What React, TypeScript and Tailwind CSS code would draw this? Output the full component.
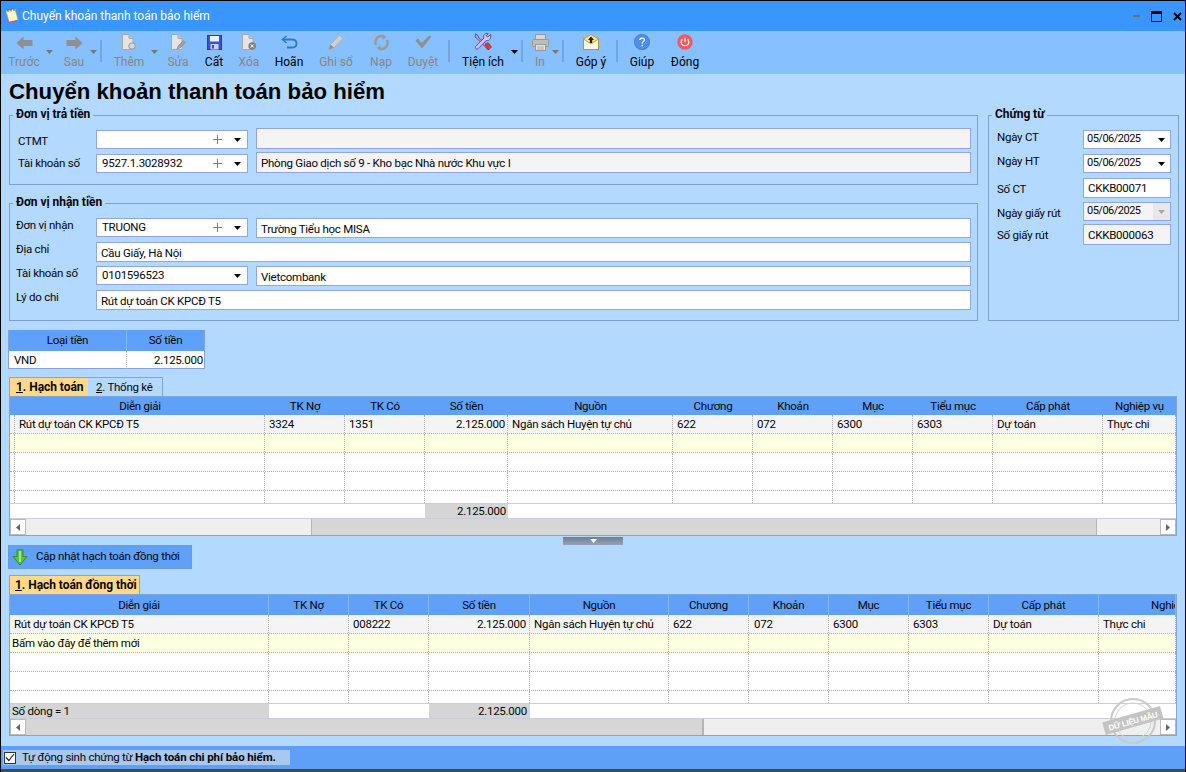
import React from "react";

const G = "#8f8f8f";

const Back = () => (
  <svg className="mt-[1px]" width="17" height="14" viewBox="0 0 17 14"><path d="M0.5 7 L7.5 0.5 V4 H16.5 V10 H7.5 V13.5 Z" fill={G} /></svg>
);
const Next = () => (
  <svg className="mt-[1px]" width="17" height="14" viewBox="0 0 17 14"><path d="M16.5 7 L9.5 0.5 V4 H0.5 V10 H9.5 V13.5 Z" fill={G} /></svg>
);
const Page = ({ children }: { children?: React.ReactNode }) => (
  <svg width="16" height="17" viewBox="0 0 16 17">
    <path d="M1.5 0.5 H8 L12 4.5 V15.5 H1.5 Z" fill="#e4e4e4" stroke="#a8a8a8" />
    <path d="M8 0.5 V4.5 H12" fill="#c4c4c4" stroke="#a8a8a8" />
    {children}
  </svg>
);
const Add = () => (
  <Page><circle cx="11" cy="12" r="3.2" fill="#d8d8d8" stroke="#999" /></Page>
);
const Edit = () => (
  <Page><path d="M7 15 L8 12 L13.5 6.5 L15.5 8.5 L10 14 Z" fill="#a0a0a0" stroke="#8a8a8a" strokeWidth="0.6" /></Page>
);
const Del = () => (
  <Page>
    <circle cx="11.2" cy="12" r="3.8" fill="#7d7d7d" />
    <path d="M9.6 10.4 L12.8 13.6 M12.8 10.4 L9.6 13.6" stroke="#fff" strokeWidth="1" />
  </Page>
);
const Save = () => (
  <svg width="15" height="15" viewBox="0 0 15 15">
    <rect x="0.5" y="0.5" width="14" height="14" fill="#3b4fd8" stroke="#2a3bb8" />
    <rect x="3" y="1" width="9" height="5.5" fill="#eef2ff" />
    <rect x="3.5" y="9" width="8" height="5.5" fill="#c9d2f5" />
    <rect x="5" y="10" width="2" height="3.5" fill="#3b4fd8" />
  </svg>
);
const Undo = () => (
  <svg width="17" height="14" viewBox="0 0 17 14" fill="none">
    <path d="M5.5 1 L1.5 4.5 L5.5 8" stroke="#2f78d0" strokeWidth="1.6" />
    <path d="M2 4.5 H11 C14 4.5 15.5 6.2 15.5 8.5 C15.5 11 14 12.5 11 12.5 H6" stroke="#2f78d0" strokeWidth="1.8" />
  </svg>
);
const Pencil = () => (
  <svg width="16" height="16" viewBox="0 0 16 16">
    <path d="M1 15.5 L2.5 10.5 L11.5 1 L15 4.5 L6 13.8 Z" fill="#cfcfcf" stroke="#b0b0b0" />
    <path d="M1 15.5 L2.5 10.5 L6 13.8 Z" fill="#8f8f8f" />
  </svg>
);
const Reload = () => (
  <svg width="17" height="17" viewBox="0 0 17 17" fill="none">
    <path d="M3 11 C1 6.5 4 2 8.5 2 L10.5 2.2" stroke="#9a9a9a" strokeWidth="2.4" />
    <path d="M9.5 0 L13.5 3 L9.5 6 Z" fill="#9a9a9a" />
    <path d="M14 6 C16 10.5 13 15 8.5 15 L6.5 14.8" stroke="#9a9a9a" strokeWidth="2.4" />
    <path d="M7.5 17 L3.5 14 L7.5 11 Z" fill="#9a9a9a" />
  </svg>
);
const Check = () => (
  <svg width="17" height="14" viewBox="0 0 17 14"><path d="M0.5 5.5 L3 3.5 L6.5 8 L14.5 0.5 L16.5 1.5 L7 13.5 Z" fill={G} /></svg>
);
const Tools = () => (
  <svg width="18" height="18" viewBox="0 0 18 18">
    <path d="M1.5 0.8 L4 2.5 L5 5 L16 14 L13.8 16.5 L3.5 6 L1 4 Z" fill="#b59be0" stroke="#4a2c90" strokeWidth="0.7" />
    <path d="M16.5 1.5 L13.8 4 L12 2.8 L14 0.7 C11 -0.3 8.8 2.5 10 5 L1.8 13.5 C0.7 15 2.4 17 4 15.7 L12.2 7.5 C15 8.5 17.8 5.5 16.5 1.5 Z" fill="#d6c8f2" stroke="#4a2c90" strokeWidth="0.8" />
    <path d="M11 12 L14 9.5 L17.5 14 L14.5 17 Z" fill="#e0393a" stroke="#8c1d1d" strokeWidth="0.6" />
  </svg>
);
const Printer = () => (
  <svg width="17" height="17" viewBox="0 0 17 17">
    <rect x="3.5" y="0.5" width="10" height="5" fill="#d8d8d8" stroke="#999" />
    <rect x="0.5" y="5.5" width="16" height="7" rx="1" fill="#bdbdbd" stroke="#999" />
    <rect x="3.5" y="10.5" width="10" height="6" fill="#e6e6e6" stroke="#999" />
    <path d="M5 13 H12 M5 15 H12" stroke="#aaa" />
  </svg>
);
const Mail = () => (
  <svg width="16" height="16" viewBox="0 0 16 16">
    <rect x="0.5" y="5" width="15" height="10.5" fill="#fff8e0" stroke="#b8923a" />
    <path d="M0.5 5 L8 0.5 L15.5 5 L8 10 Z" fill="#ffe38a" stroke="#b8923a" strokeWidth="0.8" />
    <path d="M8 2.5 L11 6 H9.2 V9 H6.8 V6 H5 Z" fill="#222" />
  </svg>
);
const Help = () => (
  <svg width="16" height="16" viewBox="0 0 16 16">
    <circle cx="8" cy="8" r="7.7" fill="#4d8fe8" stroke="#3a6fc0" strokeWidth="0.6" />
    <path d="M5.8 6 C5.8 3.4 10.4 3.4 10.4 6 C10.4 7.6 8.2 7.6 8.2 9.6" fill="none" stroke="#fff" strokeWidth="1.3" />
    <rect x="7.5" y="10.8" width="1.4" height="1.5" fill="#fff" />
  </svg>
);
const Power = () => (
  <svg width="16" height="16" viewBox="0 0 16 16">
    <circle cx="8" cy="8" r="7.7" fill="#ee5b62" />
    <path d="M5.4 5.2 A3.8 3.8 0 1 0 10.6 5.2" fill="none" stroke="#fff" strokeWidth="1.2" />
    <path d="M8 3.4 V8" stroke="#fff" strokeWidth="1.2" />
  </svg>
);
const Caret = ({ fill = "#000", w = 7 }: { fill?: string; w?: number }) => (
  <svg width={w} height="4" viewBox="0 0 7 4"><path d="M0 0 H7 L3.5 4 Z" fill={fill} /></svg>
);
const Plus = () => (
  <svg width="9" height="9" viewBox="0 0 9 9" shapeRendering="crispEdges"><path d="M4.5 0 V9 M0 4.5 H9" stroke="#2b95f5" strokeWidth="1" /></svg>
);

function Tool({ cls, label, icon, off }: { cls: string; label: string; icon: React.ReactNode; off?: boolean }) {
  return (
    <div className={`${cls} shrink-0 flex flex-col items-center`}>
      <div className="h-[22px] w-full flex items-center justify-center">{icon}</div>
      <div className={`mt-[2px] h-[15px] leading-[15px] whitespace-nowrap text-[12px] tracking-normal ${off ? "text-[#868686]" : "text-black"}`}>{label}</div>
    </div>
  );
}
function TCaret({ cls, fill }: { cls: string; fill: string }) {
  return (
    <div className={`${cls} shrink-0 pt-[19px] flex justify-center`}><Caret fill={fill} /></div>
  );
}
function Sep({ cls }: { cls: string }) {
  return <div className={`${cls} shrink-0 mt-[9px] h-[22px] w-[2px] bg-[#74a5dc]`} />;
}

const IB = "border border-[#8fa6e2]";

function Combo({ text, plus = true }: { text: string; plus?: boolean }) {
  return (
    <div className={`${IB} mt-[2px] w-[152px] h-[19px] bg-white flex items-center shrink-0`}>
      <span className="pl-[5px] flex-1 leading-[17px]">{text}</span>
      {plus && <span className="flex mr-[12px]"><Plus /></span>}
      <span className="flex mr-[6px]"><Caret /></span>
    </div>
  );
}
function Box({ text, cls }: { text: string; cls: string }) {
  return (
    <div className={`${IB} ${cls} pl-[4px] flex items-center leading-[16px] whitespace-nowrap`}>{text}</div>
  );
}
function Group({ title, cls, children }: { title: string; cls: string; children: React.ReactNode }) {
  return (
    <div className={`relative border border-[#7f9fd4] ${cls}`}>
      <div className="absolute top-[-9px] left-[3px] px-[3px] bg-[#b4d9ff] font-bold text-[12px] tracking-[-0.05px] leading-[14px] whitespace-nowrap">{title}</div>
      {children}
    </div>
  );
}
function DateBox({ cls, off }: { cls: string; off?: boolean }) {
  return (
    <div className={`${IB} ${cls} w-[88px] flex items-center ${off ? "bg-[#f4f4f4]" : "bg-white"}`}>
      <span className="pl-[3px] flex-1 text-[11px] tracking-[-0.5px]">05/06/2025</span>
      <span className={`flex justify-center w-[17px] self-stretch items-center ${off ? "bg-[#e8e8e8]" : ""}`}>
        <Caret fill={off ? "#a8a8a8" : "#000"} />
      </span>
    </div>
  );
}

const DOT = "border-r border-dotted border-[#b0b0b0]";

type Cell = { t: string; cls?: string };
type GridProps = {
  headCols: string;
  rowCols: string;
  footCols: string;
  heads: Cell[];
  first: Cell[];
  second?: Cell[];
  lead: boolean;
  headCls: string;
  foot: React.ReactNode;
  scroll: React.ReactNode;
  lastH: string;
  headDiv: boolean;
};

function DataGrid(p: GridProps) {
  const rowBg = ["bg-[#f4f4f4]", "bg-[#ffffe2]", "bg-white", "bg-white"];
  const rowsCount = [0, 1, 2, 3];
  return (
    <div className="mx-[8px] border border-[#84a3d8] bg-white shrink-0">
      <div className={`grid ${p.headCols} ${p.headCls} bg-[#5fa0f9]`}>
        {p.heads.map((h, i) => (
          <div
            key={i}
            className={`whitespace-nowrap overflow-hidden flex items-center pt-[1px] ${h.cls ?? "justify-center"} ${p.headDiv ? "border-r border-[#86b4f2]" : ""}`}
          >
            {h.t}
          </div>
        ))}
      </div>
      {rowsCount.map((r) => {
        const cells: Cell[] = r === 0 ? p.first : r === 1 && p.second ? p.second : p.first.map(() => ({ t: "", cls: "" }));
        return (
          <div key={r} className={`grid ${p.rowCols} h-[19px] border-b border-dotted border-[#b0b0b0] ${rowBg[r]}`}>
            {p.lead && <div className={DOT} />}
            {cells.map((c, i) => (
              <div key={i} className={`${DOT} whitespace-nowrap overflow-visible leading-[18px] ${c.cls ?? ""}`}>
                {c.t}
              </div>
            ))}
          </div>
        );
      })}
      <div className={`grid ${p.rowCols} ${p.lastH} border-b border-[#c4cfe2] bg-white`}>
        {p.lead && <div className={DOT} />}
        {p.first.map((_, i) => (
          <div key={i} className={DOT} />
        ))}
      </div>
      <div className={`grid ${p.footCols} h-[15px] border-b border-[#c4cfe2] leading-[14px] bg-white`}>{p.foot}</div>
      {p.scroll}
    </div>
  );
}

function Scroll({ thumb }: { thumb: React.ReactNode }) {
  return (
    <div className="flex h-[16px] bg-[#efefef]">
      <div className="w-[16px] bg-white border border-[#b9b9b9] flex items-center justify-center">
        <svg width="4" height="7" viewBox="0 0 4 7"><path d="M4 0 V7 L0 3.5 Z" fill="#666" /></svg>
      </div>
      {thumb}
      <div className="w-[16px] bg-white border border-[#b9b9b9] flex items-center justify-center">
        <svg width="4" height="7" viewBox="0 0 4 7"><path d="M0 0 V7 L4 3.5 Z" fill="#666" /></svg>
      </div>
    </div>
  );
}

export default function App() {
  return (
    <div className="relative w-[1186px] h-[772px] overflow-hidden flex flex-col bg-[#b4d9ff] border-x border-t border-black text-[11.5px] tracking-[-0.25px] text-[#050505] [font-family:Roboto,'Liberation_Sans',sans-serif]">
      {/* title bar */}
      <div className="h-[30px] shrink-0 bg-[#3996ff] flex items-center text-white text-[12px] tracking-normal">
        <span className="ml-[3px] flex">
          <svg width="16" height="16" viewBox="0 0 16 16">
            <path d="M2 3 L11 1 L14 12 L5 14 Z" fill="#fff6c0" stroke="#b9a05a" strokeWidth="0.6" />
            <path d="M1 5 L5 14 L14 12 L14 14 L4 15.5 Z" fill="#8e6cc8" />
            <path d="M4 1 L4 4 M7 0.5 L7 3.5 M10 0.5 L10 3" stroke="#6a5a8a" strokeWidth="1" />
          </svg>
        </span>
        <span className="ml-[2px] flex-1">Chuyển khoản thanh toán bảo hiểm</span>
        <span className="w-[7px] h-[2px] bg-[#6f6f6f] mr-[11px]" />
        <span className="w-[11px] h-[11px] border border-black border-t-[3px] mr-[11px]" />
        <svg className="mr-[3px]" width="9" height="9" viewBox="0 0 9 9"><path d="M1 1 L8 8 M8 1 L1 8" stroke="#000" strokeWidth="2" /></svg>
      </div>

      {/* toolbar */}
      <div className="h-[43px] shrink-0 bg-[#86c0ff] flex items-start">
        <Tool cls="ml-[3px] w-[40px]" label="Trước" icon={<Back />} off />
        <TCaret cls="w-[10px]" fill="#777" />
        <Tool cls="ml-[6px] w-[28px]" label="Sau" icon={<Next />} off />
        <TCaret cls="w-[10px]" fill="#777" />
        <Sep cls="ml-[2px]" />
        <Tool cls="ml-[7px] w-[40px]" label="Thêm" icon={<Add />} off />
        <TCaret cls="w-[10px]" fill="#777" />
        <Tool cls="ml-[1px] w-[36px]" label="Sửa" icon={<Edit />} off />
        <Tool cls="w-[36px]" label="Cất" icon={<Save />} />
        <Tool cls="w-[34px]" label="Xóa" icon={<Del />} off />
        <Tool cls="w-[46px]" label="Hoãn" icon={<Undo />} />
        <Tool cls="w-[48px]" label="Ghi sổ" icon={<Pencil />} off />
        <Tool cls="w-[42px]" label="Nạp" icon={<Reload />} off />
        <Tool cls="w-[42px]" label="Duyệt" icon={<Check />} off />
        <Sep cls="ml-[4px]" />
        <Tool cls="ml-[8px] w-[50px]" label="Tiện ích" icon={<Tools />} />
        <TCaret cls="w-[12px]" fill="#000" />
        <Sep cls="ml-[1px]" />
        <Tool cls="ml-[7px] w-[20px]" label="In" icon={<Printer />} off />
        <TCaret cls="w-[10px]" fill="#777" />
        <Sep cls="ml-[2px]" />
        <Tool cls="ml-[4px] w-[46px]" label="Góp ý" icon={<Mail />} />
        <Sep cls="ml-[2px]" />
        <Tool cls="ml-[4px] w-[40px]" label="Giúp" icon={<Help />} />
        <Tool cls="w-[46px]" label="Đóng" icon={<Power />} />
      </div>

      {/* heading */}
      <div className="h-[41px] shrink-0 pl-[8px] pt-[4px] text-[22.2px] tracking-normal leading-[27px] font-bold text-black [font-family:'Liberation_Sans',sans-serif]">
        Chuyển khoản thanh toán bảo hiểm
      </div>

      {/* forms */}
      <div className="flex pl-[8px] shrink-0">
        <div className="w-[969px] flex flex-col gap-[18px]">
          <Group title="Đơn vị trả tiền" cls="h-[70px] pt-[12px] pl-[8px] flex flex-col gap-[3px]">
            <div className="flex items-start">
              <div className="w-[78px] mt-[6px] leading-[14px]">CTMT</div>
              <Combo text="" />
              <Box text="" cls="ml-[8px] w-[715px] h-[21px] bg-[#f4f4f4]" />
            </div>
            <div className="flex items-start">
              <div className="w-[78px] mt-[4px] leading-[14px]">Tài khoản số</div>
              <Combo text="9527.1.3028932" />
              <Box text="Phòng Giao dịch số 9 - Kho bạc Nhà nước Khu vực I" cls="ml-[8px] w-[715px] h-[21px] bg-[#f4f4f4]" />
            </div>
          </Group>
          <Group title="Đơn vị nhận tiền" cls="h-[118px] pt-[14px] pl-[6px] flex flex-col gap-[4px]">
            <div className="flex items-start">
              <div className="w-[80px] leading-[14px]">Đơn vị nhận</div>
              <div className="-mt-[2px]"><Combo text="TRUONG" /></div>
              <Box text="Trường Tiểu học MISA" cls="ml-[8px] w-[715px] h-[20px] bg-white pt-[2px]" />
            </div>
            <div className="flex items-start">
              <div className="w-[80px] leading-[14px]">Địa chỉ</div>
              <Box text="Cầu Giấy, Hà Nội" cls="w-[875px] h-[20px] bg-white pt-[2px]" />
            </div>
            <div className="flex items-start">
              <div className="w-[80px] leading-[14px]">Tài khoản số</div>
              <div className="-mt-[2px]"><Combo text="0101596523" plus={false} /></div>
              <Box text="Vietcombank" cls="ml-[8px] w-[715px] h-[20px] bg-white pt-[2px]" />
            </div>
            <div className="flex items-start">
              <div className="w-[80px] leading-[14px]">Lý do chi</div>
              <Box text="Rút dự toán CK KPCĐ T5" cls="w-[875px] h-[20px] bg-white pt-[2px]" />
            </div>
          </Group>
        </div>
        <Group title="Chứng từ" cls="ml-[10px] w-[191px] h-[206px] pt-[14px] pl-[8px] flex flex-col">
          <div className="flex items-start">
            <div className="w-[86px] leading-[14px]">Ngày CT</div>
            <DateBox cls="h-[19px]" />
          </div>
          <div className="flex items-start mt-[5px]">
            <div className="w-[86px] leading-[14px]">Ngày HT</div>
            <DateBox cls="h-[19px]" />
          </div>
          <div className="flex items-start mt-[5px]">
            <div className="w-[86px] mt-[4px] leading-[14px]">Số CT</div>
            <Box text="CKKB00071" cls="w-[88px] h-[20px] bg-white" />
          </div>
          <div className="flex items-start mt-[4px]">
            <div className="w-[86px] mt-[4px] leading-[14px]">Ngày giấy rút</div>
            <DateBox cls="h-[19px]" off />
          </div>
          <div className="flex items-center mt-[3px]">
            <div className="w-[86px] leading-[14px]">Số giấy rút</div>
            <Box text="CKKB000063" cls="w-[88px] h-[21px] bg-[#f4f4f4]" />
          </div>
        </Group>
      </div>

      {/* currency */}
      <div className="ml-[7px] mt-[9px] w-[197px] shrink-0 border-x border-b border-[#84a3d8] bg-white">
        <div className="grid grid-cols-[118px_77px] h-[21px] bg-[#5fa0f9] leading-[21px] text-center">
          <div className="border-r border-[#86b4f2]">Loại tiền</div>
          <div>Số tiền</div>
        </div>
        <div className="grid grid-cols-[118px_77px] h-[17px] leading-[18px]">
          <div className={`${DOT} pl-[5px]`}>VND</div>
          <div className="text-right pr-[1px]">2.125.000</div>
        </div>
      </div>

      {/* tabs 1 */}
      <div className="flex ml-[8px] mt-[8px] h-[19px] shrink-0 items-stretch">
        <div className="w-[79px] bg-[#ffd98a] font-bold text-[12px] tracking-[-0.05px] pl-[6px] leading-[19px] border-t border-l border-[#84a3d8]"><u>1</u>. Hạch toán</div>
        <div className="w-[75px] pl-[8px] leading-[19px] border-t border-r border-[#84a3d8]"><u>2</u>. Thống kê</div>
      </div>
      <DataGrid
        headCols="grid-cols-[255px_80px_80px_83px_165px_80px_80px_80px_80px_110px_73px]"
        rowCols="grid-cols-[5px_250px_80px_80px_83px_165px_80px_80px_80px_80px_110px_73px]"
        footCols="grid-cols-[415px_83px_668px]"
        headCls="h-[18px]"
        headDiv={false}
        lead
        lastH="h-[13px]"
        heads={[
          { t: "Diễn giải", cls: "justify-center pl-[5px]" },
          { t: "TK Nợ" },
          { t: "TK Có" },
          { t: "Số tiền" },
          { t: "Nguồn" },
          { t: "Chương" },
          { t: "Khoản" },
          { t: "Mục" },
          { t: "Tiểu mục" },
          { t: "Cấp phát" },
          { t: "Nghiệp vụ" },
        ]}
        first={[
          { t: "Rút dự toán CK KPCĐ T5", cls: "pl-[4px]" },
          { t: "3324", cls: "pl-[4px]" },
          { t: "1351", cls: "pl-[4px]" },
          { t: "2.125.000", cls: "text-right pr-[2px]" },
          { t: "Ngân sách Huyện tự chủ", cls: "pl-[4px]" },
          { t: "622", cls: "pl-[4px]" },
          { t: "072", cls: "pl-[4px]" },
          { t: "6300", cls: "pl-[4px]" },
          { t: "6303", cls: "pl-[4px]" },
          { t: "Dự toán", cls: "pl-[4px]" },
          { t: "Thực chi", cls: "pl-[4px]" },
        ]}
        foot={
          <>
            <div />
            <div className="bg-[#d5d5d5] text-right pr-[2px]">2.125.000</div>
            <div />
          </>
        }
        scroll={
          <Scroll
            thumb={
              <>
                <div className="w-[285px]" />
                <div className="w-[786px] bg-[#d6d6d6] border-x border-[#b5b5b5]" />
                <div className="flex-1" />
              </>
            }
          />
        }
      />

      {/* splitter */}
      <div className="ml-[562px] mt-[1px] w-[60px] h-[8px] shrink-0 bg-gradient-to-b from-[#6f7f96] to-[#98a3b4] flex items-center justify-center">
        <Caret fill="#fff" />
      </div>

      {/* update button */}
      <div className="ml-[7px] w-[184px] h-[24px] shrink-0 bg-[#5fa0f9] border border-[#6d9ad8] flex items-center">
        <svg className="ml-[3px]" width="16" height="17" viewBox="0 0 16 17">
          <path d="M5 0.8 H11 V7.5 H15 L8 16 L1 7.5 H5 Z" fill="#59c435" stroke="#2f8a1c" strokeWidth="0.9" />
          <path d="M8 2 V13" stroke="#c4f0a8" strokeWidth="1.4" />
        </svg>
        <span className="ml-[8px] whitespace-nowrap">Cập nhật hạch toán đồng thời</span>
      </div>

      {/* tabs 2 */}
      <div className="flex ml-[8px] mt-[6px] h-[19px] shrink-0">
        <div className="w-[131px] bg-[#ffd98a] font-bold text-[12px] tracking-[-0.05px] pl-[5px] leading-[19px] border-t border-x border-[#84a3d8] whitespace-nowrap"><u>1</u>. Hạch toán đồng thời</div>
      </div>
      <DataGrid
        headCols="grid-cols-[259px_80px_80px_101px_139px_80px_80px_80px_80px_110px_77px]"
        rowCols="grid-cols-[259px_80px_80px_101px_139px_80px_80px_80px_80px_110px_77px]"
        footCols="grid-cols-[259px_160px_101px_646px]"
        headCls="h-[20px]"
        headDiv
        lead={false}
        lastH="h-[13px]"
        heads={[
          { t: "Diễn giải" },
          { t: "TK Nợ" },
          { t: "TK Có" },
          { t: "Số tiền" },
          { t: "Nguồn" },
          { t: "Chương" },
          { t: "Khoản" },
          { t: "Mục" },
          { t: "Tiểu mục" },
          { t: "Cấp phát" },
          { t: "Nghiệp vụ", cls: "justify-start pl-[52px]" },
        ]}
        first={[
          { t: "Rút dự toán CK KPCĐ T5", cls: "pl-[4px]" },
          { t: "" },
          { t: "008222", cls: "pl-[4px]" },
          { t: "2.125.000", cls: "text-right pr-[3px]" },
          { t: "Ngân sách Huyện tự chủ", cls: "pl-[4px]" },
          { t: "622", cls: "pl-[4px]" },
          { t: "072", cls: "pl-[5px]" },
          { t: "6300", cls: "pl-[4px]" },
          { t: "6303", cls: "pl-[4px]" },
          { t: "Dự toán", cls: "pl-[4px]" },
          { t: "Thực chi", cls: "pl-[4px]" },
        ]}
        second={[
          { t: "Bấm vào đây để thêm mới", cls: "pl-[2px]" },
          { t: "" },
          { t: "" },
          { t: "" },
          { t: "" },
          { t: "" },
          { t: "" },
          { t: "" },
          { t: "" },
          { t: "" },
          { t: "" },
        ]}
        foot={
          <>
            <div className="bg-[#d5d5d5] pl-[2px]">Số dòng = 1</div>
            <div />
            <div className="bg-[#d5d5d5] text-right pr-[3px]">2.125.000</div>
            <div />
          </>
        }
        scroll={
          <Scroll
            thumb={
              <>
                <div className="w-[678px] bg-[#d6d6d6] border-r-2 border-[#b5b5b5]" />
                <div className="flex-1" />
              </>
            }
          />
        }
      />

      <div className="flex-1" />

      {/* bottom bar */}
      <div className="h-[23px] shrink-0 bg-[#5e9ff8] flex items-center">
        <div className="ml-[2px] w-[287px] h-[15px] bg-[#a9c8f0] flex items-center whitespace-nowrap">
          <span className="ml-[1px] w-[12px] h-[12px] bg-white border border-[#333] flex items-center justify-center">
            <svg width="10" height="9" viewBox="0 0 10 9"><path d="M1 4.5 L3.8 7.5 L9 1" fill="none" stroke="#222" strokeWidth="1.2" /></svg>
          </span>
          <span className="ml-[6px]">Tự động sinh chứng từ <b className="tracking-[-0.1px]">Hạch toán chi phí bảo hiểm.</b></span>
        </div>
      </div>
      <div className="h-[3px] shrink-0 bg-[#45484f]" />

      {/* watermark */}
      <svg className="absolute left-[1102px] top-[696px] overflow-visible" width="62" height="50" viewBox="0 0 62 50">
        <circle cx="30" cy="24" r="22" fill="none" stroke="#c9c9c9" strokeWidth="2" />
        <circle cx="30" cy="24" r="18" fill="none" stroke="#d2d2d2" strokeWidth="1" />
        <g transform="rotate(-16 30 24)">
          <rect x="0" y="17" width="60" height="13" fill="#c4c4c4" />
          <text x="30" y="27" textAnchor="middle" fontSize="8" fontWeight="700" fill="#fff" fontFamily="Liberation Sans, sans-serif">DỮ LIỆU MẪU</text>
        </g>
      </svg>
    </div>
  );
}
